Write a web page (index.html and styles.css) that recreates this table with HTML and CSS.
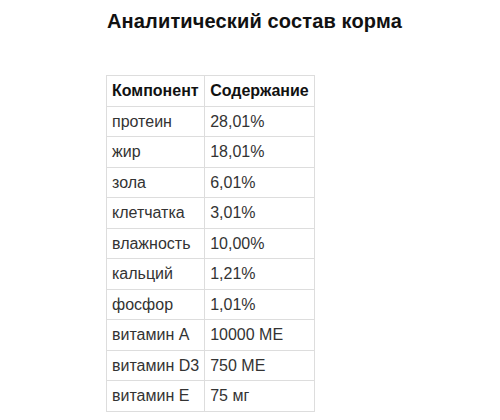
FILE: index.html
```html
<!DOCTYPE html>
<html lang="ru">
<head>
<meta charset="utf-8">
<title>Аналитический состав корма</title>
<link rel="stylesheet" href="styles.css">
</head>
<body>
<main class="page">
  <h2 class="title">Аналитический состав корма</h2>
  <table class="comp">
    <thead>
      <tr><th>Компонент</th><th>Содержание</th></tr>
    </thead>
    <tbody>
      <tr><td>протеин</td><td>28,01%</td></tr>
      <tr><td>жир</td><td>18,01%</td></tr>
      <tr><td>зола</td><td>6,01%</td></tr>
      <tr><td>клетчатка</td><td>3,01%</td></tr>
      <tr><td>влажность</td><td>10,00%</td></tr>
      <tr><td>кальций</td><td>1,21%</td></tr>
      <tr><td>фосфор</td><td>1,01%</td></tr>
      <tr><td>витамин А</td><td>10000 МЕ</td></tr>
      <tr><td>витамин D3</td><td>750 МЕ</td></tr>
      <tr><td>витамин Е</td><td>75 мг</td></tr>
    </tbody>
  </table>
</main>
</body>
</html>
```

FILE: styles.css
```css
html, body {
  margin: 0;
  padding: 0;
  background: #ffffff;
}

body {
  font-family: "Liberation Sans", Arial, sans-serif;
  color: #333333;
}

.page {
  padding: 10px 0 0 107px;
}

.title {
  margin: 0 0 42px 0;
  font-size: 20px;
  line-height: 23px;
  font-weight: bold;
  letter-spacing: 0.15px;
  color: #111111;
}

.comp {
  border-collapse: collapse;
  margin-left: -1px;
  font-size: 16px;
}

.comp th,
.comp td {
  border: 1px solid #dddddd;
  padding: 5px 5px 5px 5px;
  line-height: 19.5px;
  text-align: left;
  white-space: nowrap;
}

.comp th {
  font-weight: bold;
  color: #111111;
}
```
